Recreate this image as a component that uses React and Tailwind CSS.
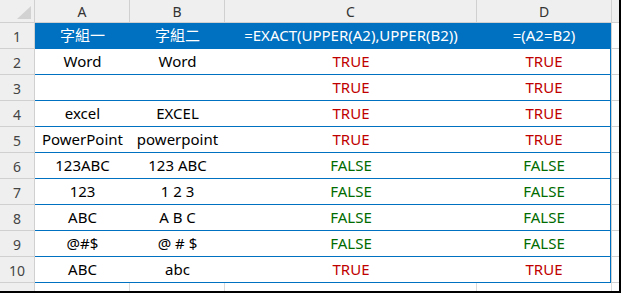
import React from "react";

const rows = [
  ["Word", "Word", true, true],
  ["", "", true, true],
  ["excel", "EXCEL", true, true],
  ["PowerPoint", "powerpoint", true, true],
  ["123ABC", "123 ABC", false, false],
  ["123", "1 2 3", false, false],
  ["ABC", "A B C", false, false],
  ["@#$", "@ # $", false, false],
  ["ABC", "abc", true, true],
];

const cols = "grid grid-cols-[35px_95px_95px_252px_134px_8px]";

function Bool({ v }) {
  return (
    <span className={v ? "text-[#c00000]" : "text-[#006b00]"}>
      {v ? "TRUE" : "FALSE"}
    </span>
  );
}

export default function App() {
  return (
    <div
      className="w-[621px] h-[293px] bg-white overflow-hidden border-r-2 border-b-2 border-black text-[15px] text-black"
      style={{ fontFamily: '"Noto Sans", "Noto Sans CJK TC", sans-serif' }}
    >
      {/* column letters */}
      <div className={`${cols} h-[23px] bg-[#efefef] text-[#333] text-[14px]`}>
        <div className="relative border-r border-b border-[#d0d0d0]">
          <svg className="absolute left-[17px] top-[6px]" width="14" height="13" viewBox="0 0 14 13">
            <polygon points="14,0 14,13 0,13" fill="#d2d2d2" />
          </svg>
        </div>
        <div className="flex items-center justify-center border-r border-b border-[#d0d0d0]">A</div>
        <div className="flex items-center justify-center border-r border-b border-[#d0d0d0]">B</div>
        <div className="flex items-center justify-center border-r border-b border-[#d0d0d0]">C</div>
        <div className="flex items-center justify-center border-b border-[#d0d0d0]">D</div>
        <div className="border-l border-b border-[#d0d0d0]"></div>
      </div>

      {/* row 1: table header */}
      <div className={`${cols} h-[26px]`}>
        <div className="flex items-end justify-center pb-[1px] bg-[#efefef] text-[#444] text-[14px] border-r border-b border-[#d0d0d0]">1</div>
        <div className="col-span-4 grid grid-cols-[95px_95px_252px_134px] bg-[#0070c0] text-white border-r border-b border-[#0070c0]">
          <div className="flex items-center justify-center">字組一</div>
          <div className="flex items-center justify-center">字組二</div>
          <div className="flex items-center justify-center">=EXACT(UPPER(A2),UPPER(B2))</div>
          <div className="flex items-center justify-center">=(A2=B2)</div>
        </div>
        <div className="border-l border-b border-[#d0d0d0]"></div>
      </div>

      {rows.map((r, i) => (
        <div key={i} className={`${cols} h-[26px]`}>
          <div className="flex items-end justify-center pb-[1px] bg-[#efefef] text-[#444] text-[14px] border-r border-b border-[#d0d0d0]">
            {i + 2}
          </div>
          <div className="col-span-4 grid grid-cols-[95px_95px_252px_134px] border-r border-b border-[#0070c0]">
            <div className="flex items-center justify-center">{r[0]}</div>
            <div className="flex items-center justify-center whitespace-pre">{r[1]}</div>
            <div className="flex items-center justify-center"><Bool v={r[2]} /></div>
            <div className="flex items-center justify-center"><Bool v={r[3]} /></div>
          </div>
          <div className="border-l border-b border-[#d0d0d0]"></div>
        </div>
      ))}

      {/* row 11, cut off */}
      <div className={`${cols} h-[8px]`}>
        <div className="bg-[#efefef] border-r border-[#d0d0d0]"></div>
        <div className="border-r border-[#dadada]"></div>
        <div className="border-r border-[#dadada]"></div>
        <div className="border-r border-[#dadada]"></div>
        <div></div>
        <div className="border-l border-[#dadada]"></div>
      </div>
    </div>
  );
}
